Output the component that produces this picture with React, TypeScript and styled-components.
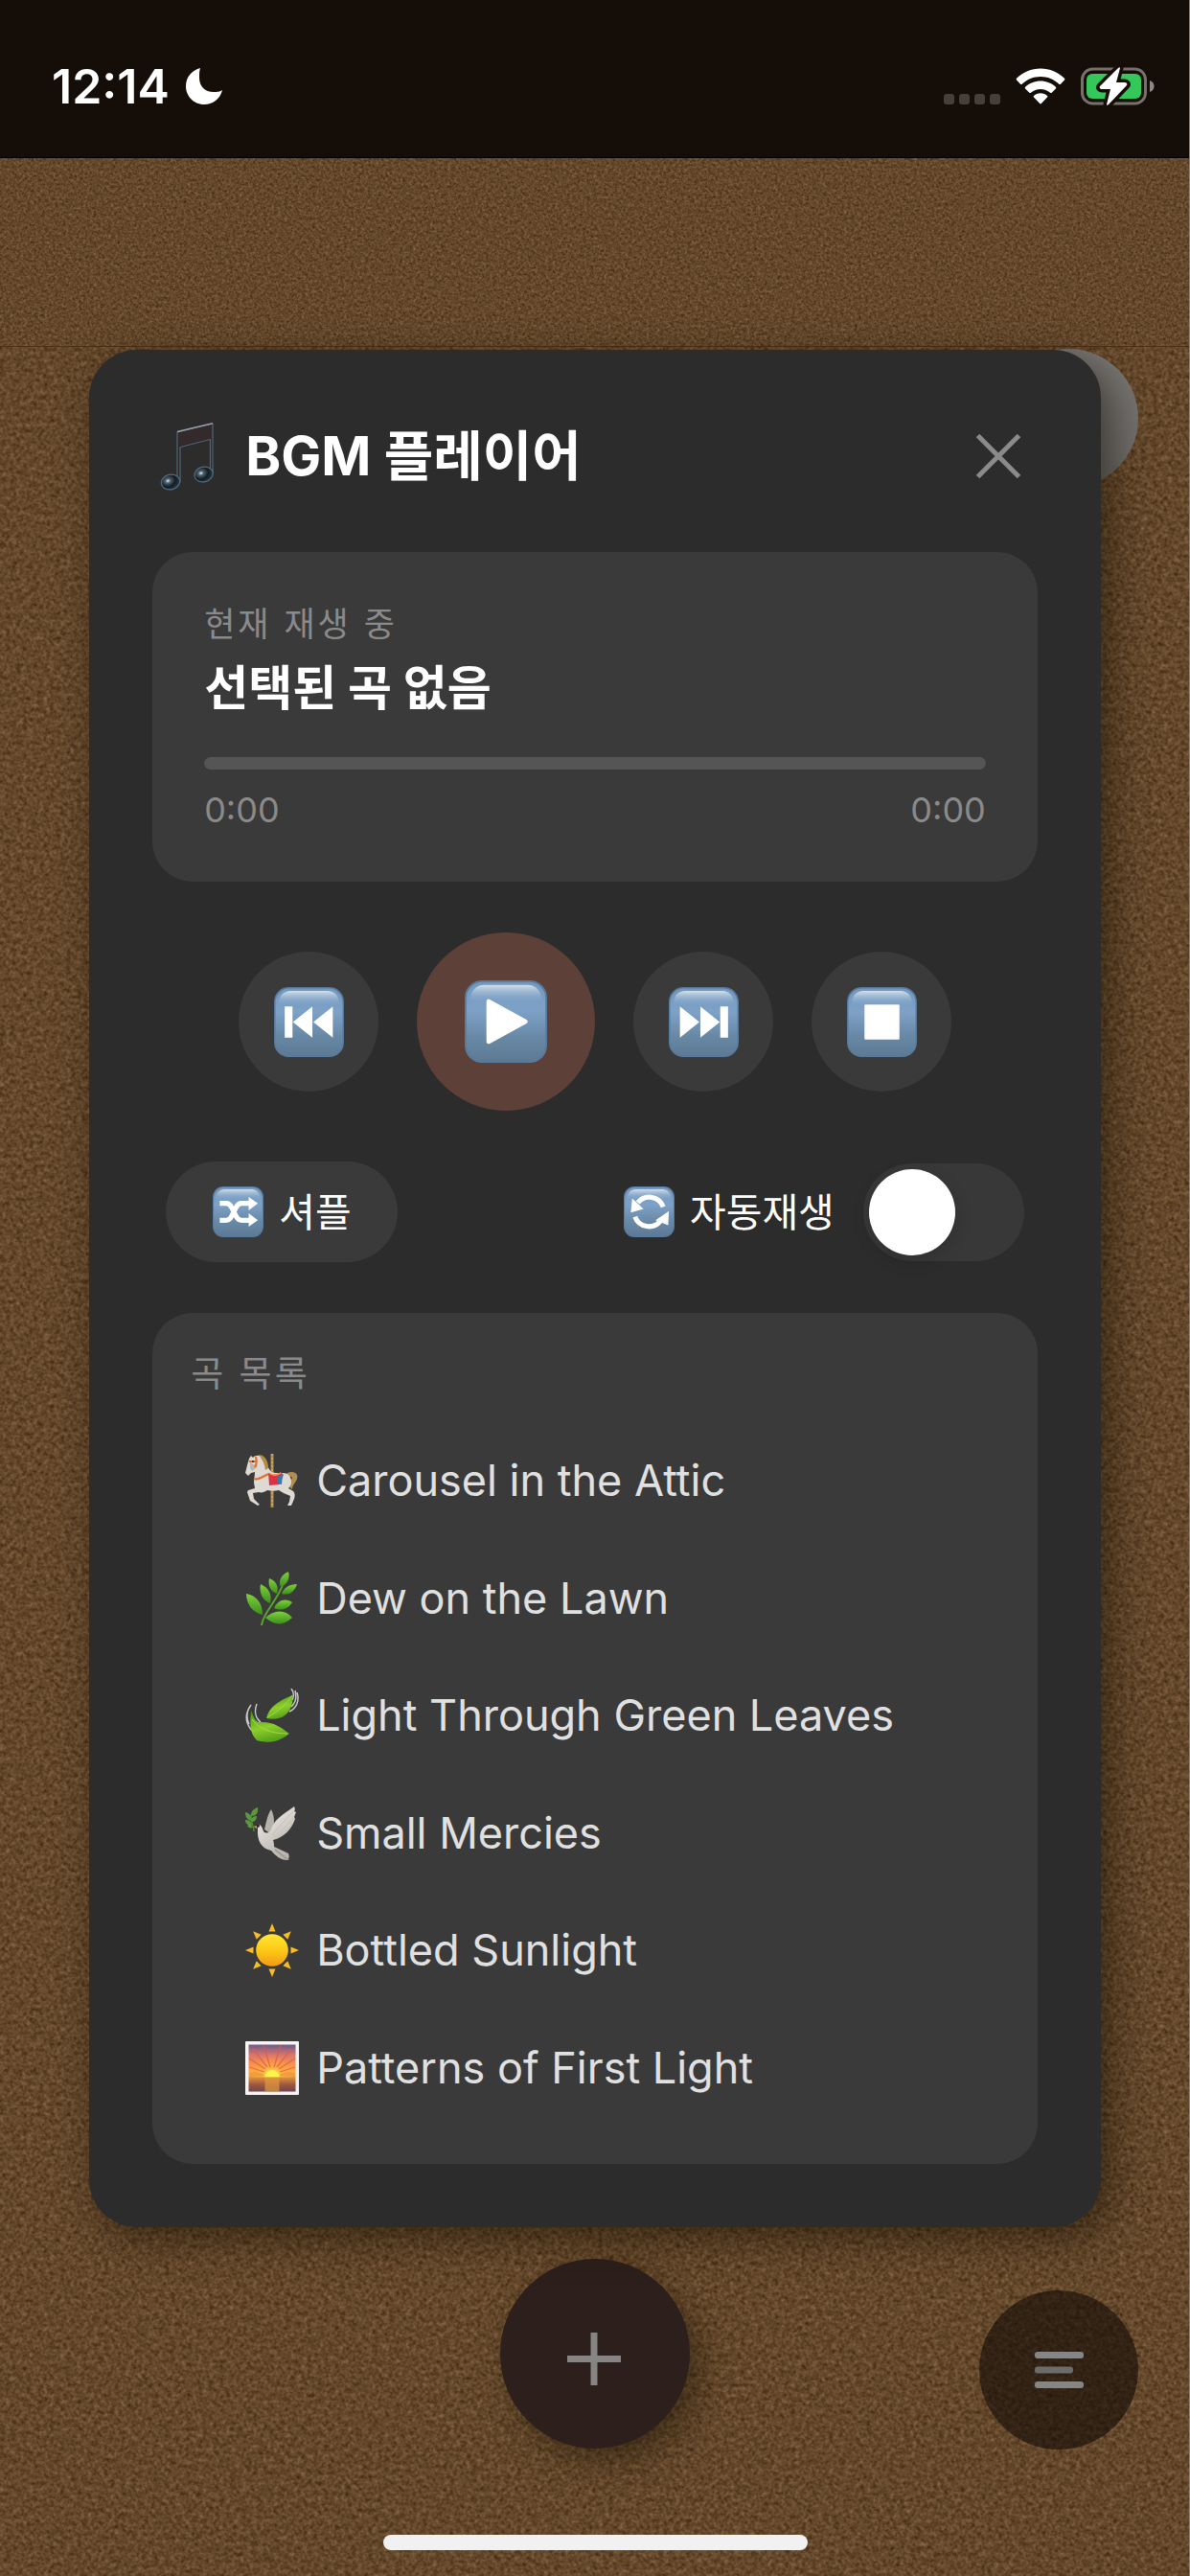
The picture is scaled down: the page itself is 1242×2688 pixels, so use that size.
import React, { useState } from 'react';
import styled, { createGlobalStyle } from 'styled-components';

const GlobalStyle = createGlobalStyle`
  *, *::before, *::after { box-sizing: border-box; }
  html, body { margin: 0; padding: 0; background: #64482b; }
  body, button, input {
    font-family: Inter, "Noto Sans CJK KR", "Noto Sans", sans-serif;
  }
  button { border: 0; padding: 0; background: none; color: inherit; cursor: pointer; }
  h1, h2, p, ul { margin: 0; padding: 0; }
  svg { display: block; }
`;

/* ---------- page ---------- */

const Page = styled.div`
  position: relative;
  min-height: 100vh;
  overflow: hidden;
  display: flex;
  flex-direction: column;
  background: #64482b;
`;

const Cork = styled.svg`
  position: absolute;
  inset: 0;
  width: 100%;
  height: 100%;
`;

const StatusBar = styled.header`
  position: relative;
  display: flex;
  align-items: center;
  justify-content: space-between;
  height: 165px;
  padding: 16px 37px 0 54px;
  background: #150d07;
  border-bottom: 1px solid #000;
`;

const StatusGroup = styled.div<{ $gap: number }>`
  display: flex;
  align-items: center;
  gap: ${(p) => p.$gap}px;
`;

const Clock = styled.span`
  color: #fff;
  font-size: 50px;
  line-height: 60px;
  font-weight: 600;
`;

const CellDots = styled.div`
  display: flex;
  gap: 5px;
  padding-top: 26px;

  i {
    width: 11px;
    height: 11px;
    border-radius: 3px;
    background: #473d39;
  }
`;

const TopStrip = styled.div`
  position: relative;
  height: 197px;
  overflow: hidden;
  background: #64482b;
  border-bottom: 1px solid #49311b;
`;

const EdgeLine = styled.div`
  position: absolute;
  top: 0;
  right: 0;
  bottom: 0;
  width: 1px;
  background: #8b8178;
`;

/* ---------- floating controls ---------- */

const CornerButton = styled.button`
  position: absolute;
  top: 364px;
  right: 54px;
  width: 145px;
  height: 145px;
  border-radius: 50%;
  background: linear-gradient(200deg, #7b7876, #656361);
`;

const AddButton = styled.button`
  position: absolute;
  bottom: 133px;
  left: calc(50% - 99px);
  width: 198px;
  height: 198px;
  border-radius: 50%;
  display: grid;
  place-items: center;
  padding: 11px 3px 0 0;
  background: #2c1f1c;
  box-shadow: 12px 14px 32px rgba(30, 22, 8, 0.5);
`;

const MenuButton = styled.button`
  position: absolute;
  bottom: 132px;
  right: 54px;
  width: 166px;
  height: 166px;
  border-radius: 50%;
  display: grid;
  place-items: center;
  background: rgba(16, 10, 6, 0.6);
`;

const HomeIndicator = styled.div`
  position: absolute;
  bottom: 27px;
  left: calc(50% - 221px);
  width: 443px;
  height: 16px;
  border-radius: 8px;
  background: #f1f1f1;
`;

/* ---------- modal ---------- */

const Overlay = styled.div`
  position: absolute;
  inset: 0;
  display: flex;
  align-items: center;
  justify-content: center;
  padding-top: 1px;
  pointer-events: none;
`;

const Modal = styled.section`
  width: 85%;
  display: flex;
  flex-direction: column;
  gap: 53px;
  padding: 66px;
  border-radius: 50px;
  background: #2c2c2c;
  box-shadow: 10px 12px 40px rgba(20, 12, 2, 0.55);
  pointer-events: auto;
`;

const ModalHeader = styled.div`
  display: flex;
  align-items: center;
  justify-content: space-between;
  height: 90px;
  margin-bottom: 2px;
  padding: 0 14px 0 6px;
`;

const Title = styled.h1`
  display: flex;
  align-items: center;
  gap: 25px;
  color: #fff;
  font-size: 56px;
  line-height: 84px;
  font-weight: 700;
`;

const Card = styled.div`
  border-radius: 42px;
  background: #3a3a3a;
`;

const NowPlaying = styled(Card)`
  display: flex;
  flex-direction: column;
  padding: 54px;
`;

const Caption = styled.p<{ $large?: boolean }>`
  color: #8a8a8a;
  font-size: ${(p) => (p.$large ? 37 : 35)}px;
  line-height: 42px;
  letter-spacing: 3px;
`;

const TrackName = styled.h2`
  margin: 17px 0 43px;
  color: #fff;
  font-size: 50px;
  line-height: 58px;
  font-weight: 700;
`;

const Seek = styled.input`
  appearance: none;
  display: block;
  width: 100%;
  height: 13px;
  margin: 0 0 21px;
  border-radius: 7px;
  background: #555;

  &::-webkit-slider-thumb {
    appearance: none;
    width: 0;
    height: 0;
  }
`;

const Times = styled.div`
  display: flex;
  justify-content: space-between;
  color: #8a8a8a;
  font-size: 36px;
  line-height: 42px;
`;

const Controls = styled.div`
  display: flex;
  align-items: center;
  justify-content: center;
  gap: 40px;
`;

const RoundButton = styled.button<{ $primary?: boolean }>`
  width: ${(p) => (p.$primary ? 186 : 146)}px;
  height: ${(p) => (p.$primary ? 186 : 146)}px;
  border-radius: 50%;
  display: grid;
  place-items: center;
  background: ${(p) => (p.$primary ? '#5d4037' : '#3a3a3a')};
`;

const Options = styled.div`
  display: flex;
  align-items: center;
  justify-content: space-between;
  height: 105px;
  padding: 0 14px;
  color: #fff;
  font-size: 41px;
  line-height: 60px;
`;

const ShuffleButton = styled.button`
  display: flex;
  align-items: center;
  gap: 16px;
  height: 105px;
  padding: 0 48px 0 49px;
  border-radius: 53px;
  background: #3a3a3a;
  font-size: 41px;
  line-height: 60px;
`;

const AutoPlay = styled.label`
  display: flex;
  align-items: center;
  gap: 16px;
`;

const Switch = styled.input`
  appearance: none;
  flex: none;
  width: 168px;
  height: 102px;
  margin: 0 0 0 14px;
  padding: 6px;
  border-radius: 51px;
  background: #383838;
  display: flex;
  align-items: center;
  cursor: pointer;

  &::before {
    content: '';
    width: 90px;
    height: 90px;
    border-radius: 50%;
    background: #fff;
    box-shadow: 0 6px 18px rgba(0, 0, 0, 0.15);
  }

  &:checked { justify-content: flex-end; background: #5d4037; }
`;

const ListCard = styled(Card)`
  padding: 43px 40px 39px;
`;

const Tracks = styled.ul`
  display: grid;
  grid-auto-rows: 1fr;
  min-height: 735px;
  margin-top: 29px;
  list-style: none;

  li { display: flex; }
`;

const TrackButton = styled.button`
  flex: 1;
  display: flex;
  align-items: center;
  gap: 18px;
  padding-left: 57px;
  color: #e0e0e0;
  font-size: 45px;
  line-height: 60px;
  text-align: left;
`;

/* ---------- drawings ---------- */

const SharedDefs = () => (
  <svg width="0" height="0" style={{ position: 'absolute' }} aria-hidden="true">
    <defs>
      <linearGradient id="keyFace" x1="0" y1="0" x2="0" y2="1">
        <stop offset="0" stopColor="#7398bd" />
        <stop offset="0.35" stopColor="#7ea1c7" />
        <stop offset="0.7" stopColor="#6889a6" />
        <stop offset="1" stopColor="#5d7a94" />
      </linearGradient>
      <linearGradient id="keyShine" x1="0" y1="0" x2="0" y2="1">
        <stop offset="0" stopColor="#d3e0ec" />
        <stop offset="1" stopColor="#7ea1c7" stopOpacity="0" />
      </linearGradient>
      <linearGradient id="leaf" x1="0" y1="0" x2="0" y2="1">
        <stop offset="0" stopColor="#7fd13b" />
        <stop offset="1" stopColor="#3b8f1c" />
      </linearGradient>
      <linearGradient id="leafLight" x1="0" y1="0" x2="0.3" y2="1">
        <stop offset="0" stopColor="#3f9418" />
        <stop offset="0.6" stopColor="#8ccf2c" />
        <stop offset="1" stopColor="#5aa41c" />
      </linearGradient>
      <linearGradient id="sunFill" x1="0" y1="0" x2="0" y2="1">
        <stop offset="0" stopColor="#ffe733" />
        <stop offset="0.5" stopColor="#fcc916" />
        <stop offset="1" stopColor="#f19a15" />
      </linearGradient>
      <linearGradient id="dawn" x1="0" y1="0" x2="0" y2="1">
        <stop offset="0" stopColor="#6c5a8a" />
        <stop offset="0.22" stopColor="#d8766a" />
        <stop offset="0.48" stopColor="#ff9a45" />
        <stop offset="0.66" stopColor="#ffc24a" />
        <stop offset="0.7" stopColor="#d8913e" />
        <stop offset="0.85" stopColor="#a0573f" />
        <stop offset="1" stopColor="#6f4450" />
      </linearGradient>
      <radialGradient id="dawnGlow" cx="0.5" cy="0.9" r="0.6">
        <stop offset="0" stopColor="#fff36a" />
        <stop offset="0.35" stopColor="#ffb43c" stopOpacity="0.75" />
        <stop offset="1" stopColor="#ff8a45" stopOpacity="0" />
      </radialGradient>
      <linearGradient id="feather" x1="0" y1="0" x2="0.5" y2="1">
        <stop offset="0" stopColor="#f3f0eb" />
        <stop offset="1" stopColor="#b9b4ae" />
      </linearGradient>
      <radialGradient id="noteHead" cx="0.38" cy="0.38" r="0.65">
        <stop offset="0" stopColor="#e4ecf1" />
        <stop offset="0.22" stopColor="#4c6270" />
        <stop offset="0.6" stopColor="#161c21" />
        <stop offset="1" stopColor="#263945" />
      </radialGradient>
    </defs>
  </svg>
);

const Key = ({ size, children }: { size: number; children: React.ReactNode }) => (
  <svg width={size} height={size} viewBox="0 0 72 72" aria-hidden="true">
    <rect width="72" height="72" rx="15" fill="#587a9c" />
    <rect x="1.5" y="1.5" width="69" height="69" rx="14" fill="url(#keyFace)" />
    <path d="M5 20V17C5 9 10 4 17 4h38c7 0 12 5 12 13v3z" fill="url(#keyShine)" />
    <g fill="#fff">{children}</g>
  </svg>
);

const MusicNotes = () => (
  <svg width="66" height="74" viewBox="0 0 66 74" aria-hidden="true">
    <path
      d="M20 12 57 3V56h-2.500V19.500L23 27.500V64h-3z"
      fill="#2b2628"
      stroke="#506877"
      strokeWidth="1.200"
      strokeLinejoin="round"
    />
    <path d="M21 13 56 4.500V18L22.500 26z" fill="#352a2b" />
    <path d="M20 11.500 57 2.800" stroke="#96a0a6" strokeWidth="1.500" />
    <ellipse cx="13" cy="64" rx="9.800" ry="7.800" fill="url(#noteHead)" stroke="#4f6c80" strokeWidth="1.200" transform="rotate(-14 13 64)" />
    <ellipse cx="47.500" cy="56" rx="9.800" ry="7.800" fill="url(#noteHead)" stroke="#4f6c80" strokeWidth="1.200" transform="rotate(-14 47.500 56)" />
  </svg>
);

const Carousel = () => (
  <svg width="56" height="56" viewBox="0 0 56 56" aria-hidden="true">
    <path d="M28 0v56" stroke="#b08d4e" strokeWidth="3" />
    <path d="M28 0v56" stroke="#d9bd80" strokeWidth="1" strokeDasharray="2 2" />
    <path d="M40 24c3-5 11-7 14-2 2 6-5 9-5 15-4-2-4-7-1-10 2-3 0-4-2-3-2 1-3 2-4 4z" fill="#b08d50" />
    <path
      d="M4 5l2-3 2 2c3-3 8-3 11 1 3 4 4 8 6 11 2 3 4 4 7 4h7c6 0 9 4 9 9 0 3-1 5-3 7l5 3c2 2 2 5 1 8l-3 7h-4l2-4 1-6-7-3-5-3c-4 1-8 1-12 0-3 2-6 3-9 2l-6 1 1 6 6 6-2 1-8-5-3-9 1-2 7-2c0-2-1-4-1-6 0-4 1-7 1-11l-4 1-3 3-3-3 2-8z"
      fill="#dedad3"
    />
    <path d="M5 8c2 2 4 4 8 5l-2 2-4 3-2-3z" fill="#b7b6b1" />
    <path d="M14 1c6 0 10 6 10 14l-3 2c-1-6-2-9-5-13z" fill="#b38b46" />
    <path d="M4 8h7M11 3c1 4 1 8-1 11M9 26c6 2 11-4 16-5" stroke="#df7130" strokeWidth="2.200" fill="none" />
    <path d="M24 20c4 3 8 2 13-1l3 3-4 10-11 1z" fill="#db3341" />
    <path d="M34 24l5-3-1 11-5-1z" fill="#2c7cb5" />
    <path d="M25 20c4 3 8 3 12 0" stroke="#f0a64a" strokeWidth="1.500" fill="none" />
    <circle cx="8" cy="8" r="1" fill="#222" />
  </svg>
);

const Herb = () => (
  <svg width="56" height="56" viewBox="0 0 56 56" aria-hidden="true">
    <path d="M17 56c1-12 15-24 22-42" stroke="#57a52c" strokeWidth="2" fill="none" />
    <g fill="url(#leaf)">
      <path d="M45 0c2 7-1 13-8 16-3-7 1-13 8-16z" />
      <path d="M25 7c8 3 10 9 8 16-6-2-10-8-8-16z" />
      <path d="M54 13c-3 9-9 12-16 10 2-6 8-10 16-10z" />
      <path d="M16 13c9 4 12 11 10 20-8-3-12-11-10-20z" />
      <path d="M49 32c-5 8-12 9-19 6 4-8 11-11 19-6z" />
      <path d="M1 23c11 2 17 10 17 22C8 43 1 34 1 23z" />
      <path d="M49 48c-9 9-19 8-28 0 9-8 20-9 28 0z" />
    </g>
  </svg>
);

const FlutteringLeaves = () => (
  <svg width="56" height="56" viewBox="0 0 56 56" aria-hidden="true">
    <g fill="none" stroke="#c9c9c9" strokeWidth="1.500">
      <path d="M6 17C-1 27 0 36 7 44M12 16c-3 8-1 15 4 19M3 22c-2 6-1 11 1 15" />
      <path d="M48 0c3 4 3 8 1 12M54 4c3 9-1 17-8 20M52 2c2 9 0 13-4 17" />
    </g>
    <path d="M49 7c2 15-8 28-27 24C25 18 37 12 49 7z" fill="url(#leafLight)" />
    <path d="M49 7c-6 9-15 17-26 23" stroke="#a8d84a" strokeWidth="1" fill="none" />
    <path d="M6 23c3 6 3 10 8 12 15-1 23 5 32 12-12 10-24 10-34 7C4 46 5 35 6 23z" fill="url(#leafLight)" />
    <path d="M7 32c7 10 20 15 37 15" stroke="#a8d84a" strokeWidth="1" fill="none" />
  </svg>
);

const Dove = () => (
  <svg width="56" height="56" viewBox="0 0 56 56" aria-hidden="true">
    <path d="M20 24c2-8 3-15 7-21 2 4 3 8 3 14l-3 12z" fill="#b5b1ab" />
    <path d="M12 18c4 0 6 4 7 8 2 2 4 2 7 0C29 14 40 8 51 0c1 2 1 4 0 5l2 1-2 5 1 2c-4 11-11 19-23 22 1 3 1 5 1 7l15 7c1 3 1 5-1 7-7 0-13-5-17-10-10-2-15-10-14-23z" fill="url(#feather)" />
    <path d="M28 30c7-9 14-16 22-25M30 31c8-6 15-12 20-19M31 33c8-4 14-9 18-15" stroke="#c4bfb9" strokeWidth="1" fill="none" />
    <path d="M31 45l14 11" stroke="#a09b95" strokeWidth="2" />
    <circle cx="13" cy="20" r="2" fill="#342a25" />
    <path d="M8 21l4-1v3z" fill="#c9886c" />
    <path d="M9 26C9 18 3 14 8 5" stroke="#4c8a36" strokeWidth="1.500" fill="none" />
    <g fill="#5b9840">
      <path d="M13 1c1 6-2 9-7 9 0-5 3-8 7-9zM0 6c5 1 7 4 6 9-4-1-6-4-6-9zM12 10c0 5-3 6-6 6 0-4 2-6 6-6zM0 14c4 0 7 2 7 6-4 0-7-2-7-6zM2 20c3-1 5 0 6 2-3 1-5 0-6-2z" />
    </g>
  </svg>
);

const Sun = () => (
  <svg width="56" height="56" viewBox="0 0 56 56" aria-hidden="true">
    <g fill="#f9bd24">
      {[0, 45, 90, 135, 180, 225, 270, 315].map((a) => (
        <path key={a} d="M28 0l3.500 8.500h-7z" transform={`rotate(${a} 28 28)`} />
      ))}
    </g>
    <circle cx="28" cy="28" r="16.800" fill="url(#sunFill)" />
  </svg>
);

const Sunrise = () => (
  <svg width="56" height="56" viewBox="0 0 56 56" aria-hidden="true">
    <rect width="56" height="56" rx="1" fill="#f7f5f4" />
    <rect x="3.500" y="3.500" width="49" height="49" fill="url(#dawn)" />
    <rect x="3.500" y="3.500" width="49" height="34" fill="url(#dawnGlow)" />
    <g stroke="#e2564c" strokeWidth="1.300" opacity="0.75">
      <path d="M26 27 19 4M30 27 37 4M23 27 8 8M33 27 48 8M21 29 4 18M35 29 52 18M20 32 4 27M36 32 52 27" />
    </g>
    <path d="M20.500 37.500a7.500 7.500 0 0 1 15 0z" fill="#fff34d" />
    <path d="M4 33l6-1 8 2 2 2-16 1zM52 33l-7-1-8 2-1 2 16 1z" fill="#ef9e3d" />
    <rect x="20.500" y="37.500" width="15" height="15" fill="#e09a3c" opacity="0.7" />
  </svg>
);

const TRACKS = [
  { title: 'Carousel in the Attic', Icon: Carousel },
  { title: 'Dew on the Lawn', Icon: Herb },
  { title: 'Light Through Green Leaves', Icon: FlutteringLeaves },
  { title: 'Small Mercies', Icon: Dove },
  { title: 'Bottled Sunlight', Icon: Sun },
  { title: 'Patterns of First Light', Icon: Sunrise },
];

/* Two noise fields of unrelated pitch are averaged so that no grid shows through. */
const CorkTexture = ({ id, grain }: { id: string; grain: number }) => (
  <Cork aria-hidden="true">
    <filter id={id} x="0" y="0" width="100%" height="100%" colorInterpolationFilters="sRGB">
      <feTurbulence type="fractalNoise" baseFrequency={grain} numOctaves={2} seed={7} result="a" />
      <feTurbulence type="fractalNoise" baseFrequency={grain * 0.617} numOctaves={3} seed={23} result="b" />
      <feColorMatrix in="a" values="1 0 0 0 0  1 0 0 0 0  1 0 0 0 0  0 0 0 0 1" result="ga" />
      <feColorMatrix in="b" values="0 1 0 0 0  0 1 0 0 0  0 1 0 0 0  0 0 0 0 1" result="gb" />
      <feComposite in="ga" in2="gb" operator="arithmetic" k1="0" k2="0.55" k3="0.45" k4="0" />
      <feColorMatrix
        values="0.460 0 0 0 0.162
                0.400 0 0 0 0.082
                0.340 0 0 0 -0.001
                0 0 0 0 1"
      />
    </filter>
    <rect width="100%" height="100%" filter={`url(#${id})`} />
  </Cork>
);

export default function App() {
  const [autoPlay, setAutoPlay] = useState(false);

  return (
    <Page>
      <GlobalStyle />
      <SharedDefs />
      <CorkTexture id="boardCork" grain={0.283} />

      <StatusBar>
        <StatusGroup $gap={16}>
          <Clock>12:14</Clock>
          <svg width="40" height="40" viewBox="0 0 40 40" aria-label="Focus">
            <path d="M16 1C8 3 1 10 1 20c0 10 8 19 19 19 9 0 17-6 19-15-3 2-6 2-9 2-9 0-15-6-15-15 0-4 0-7 1-10z" fill="#fff" />
          </svg>
        </StatusGroup>
        <StatusGroup $gap={16}>
          <CellDots><i /><i /><i /><i /></CellDots>
          <svg width="52" height="38" viewBox="0 0 52 38" aria-label="Wi-Fi">
            <g fill="#fff">
              <path d="M26 0.500c9.500 0 18.500 3.800 25 10.200.5.500.5 1.200 0 1.700l-4 4.300c-.5.500-1.200.5-1.700 0C40 11.700 33.300 9 26 9S12 11.700 6.700 16.700c-.5.500-1.200.5-1.700 0l-4-4.300c-.5-.5-.5-1.200 0-1.700C7.500 4.300 16.500.5 26 .5z" />
              <path d="M26 13.500c6 0 11.600 2.300 15.900 6.200.5.500.5 1.200 0 1.700l-4.200 4.300c-.5.500-1.100.5-1.600 0C33.300 23.400 29.800 22 26 22s-7.300 1.400-10.100 3.700c-.5.500-1.100.5-1.600 0l-4.200-4.300c-.5-.5-.5-1.200 0-1.700 4.300-3.900 9.900-6.200 15.900-6.200z" />
              <path d="M26 26.300c2.700 0 5.100 1 7 2.600.5.400.5 1.200 0 1.700l-6.200 6.400c-.5.500-1.100.5-1.600 0L19 30.600c-.5-.5-.5-1.300 0-1.700 1.900-1.600 4.300-2.600 7-2.600z" />
            </g>
          </svg>
          <svg width="77" height="40" viewBox="0 0 77 40" aria-label="Battery charging">
            <rect x="1.500" y="2" width="66" height="36" rx="11" fill="none" stroke="#77716d" strokeWidth="3" />
            <path d="M72 14c3 1 4.500 3 4.500 6s-1.500 5-4.500 6z" fill="#8e8986" />
            <rect x="6" y="7" width="57" height="26" rx="6" fill="#34c759" />
            <path
              d="M39 1 20 20c-1 1.500 0 3 2 3h9l-4 16c0 1 1 1 2 0l19-20c1-1 0-3-2-3h-9l4-15c0-1-1-1-2 0z"
              fill="#fff"
              stroke="#150d07"
              strokeWidth="7"
              paintOrder="stroke"
            />
          </svg>
        </StatusGroup>
      </StatusBar>

      <TopStrip>
        <CorkTexture id="stripCork" grain={0.447} />
      </TopStrip>

      <EdgeLine />
      <CornerButton aria-label="Music" />
      <AddButton aria-label="Add">
        <svg width="56" height="56" viewBox="0 0 56 56" aria-hidden="true">
          <path d="M28 0v55M0 27.500h56" stroke="#868584" strokeWidth="7" />
        </svg>
      </AddButton>
      <MenuButton aria-label="Menu">
        <svg width="51" height="38" viewBox="0 0 51 38" aria-hidden="true">
          <rect width="51" height="7" rx="3" fill="#858585" />
          <rect y="15.500" width="40" height="7" rx="3" fill="#6e6c6a" />
          <rect y="31" width="51" height="7" rx="3" fill="#858585" />
        </svg>
      </MenuButton>
      <HomeIndicator />

      <Overlay>
        <Modal role="dialog" aria-labelledby="player-title">
          <ModalHeader>
            <Title>
              <MusicNotes />
              <span id="player-title">BGM 플레이어</span>
            </Title>
            <button aria-label="닫기">
              <svg width="54" height="54" viewBox="0 0 54 54" aria-hidden="true">
                <path d="M5.500 5.500l43 43M48.500 5.500l-43 43" stroke="#8a8a8a" strokeWidth="5" />
              </svg>
            </button>
          </ModalHeader>

          <NowPlaying>
            <Caption>현재 재생 중</Caption>
            <TrackName>선택된 곡 없음</TrackName>
            <Seek type="range" min="0" max="100" defaultValue="0" aria-label="재생 위치" />
            <Times>
              <span>0:00</span>
              <span>0:00</span>
            </Times>
          </NowPlaying>

          <Controls>
            <RoundButton aria-label="이전 곡">
              <Key size={73}>
                <path d="M11 20h8v32h-8zM39.500 20v32L19.500 36zM60.500 20v32L40.500 36z" />
              </Key>
            </RoundButton>
            <RoundButton $primary aria-label="재생">
              <Key size={86}>
                <path d="M21 18.500v35L53 36z" stroke="#fff" strokeWidth="4" strokeLinejoin="round" />
              </Key>
            </RoundButton>
            <RoundButton aria-label="다음 곡">
              <Key size={73}>
                <path d="M61 20h-8v32h8zM32.500 20v32l20-16zM11.500 20v32l20-16z" />
              </Key>
            </RoundButton>
            <RoundButton aria-label="정지">
              <Key size={73}>
                <rect x="18" y="18" width="36" height="36" rx="1" />
              </Key>
            </RoundButton>
          </Controls>

          <Options>
            <ShuffleButton>
              <Key size={53}>
                <path
                  d="M10 24h9c4 0 6 2 8 6l6 12c2 4 4 6 8 6h11M10 48h9c4 0 6-2 8-6l6-12c2-4 4-6 8-6h11"
                  fill="none"
                  stroke="#fff"
                  strokeWidth="7"
                />
                <path d="M51 15l13 9-13 10zM51 38l13 10-13 9z" />
              </Key>
              셔플
            </ShuffleButton>
            <AutoPlay>
              <Key size={53}>
                <path d="M56 29A21 21 0 0 0 20 23M16 43a21 21 0 0 0 36 6" fill="none" stroke="#fff" strokeWidth="7" />
                <path d="M12 17l-2 20 18-5zM64 35l-1 20-18-7z" />
              </Key>
              <span>자동재생</span>
              <Switch type="checkbox" checked={autoPlay} onChange={(e) => setAutoPlay(e.target.checked)} />
            </AutoPlay>
          </Options>

          <ListCard>
            <Caption $large>곡 목록</Caption>
            <Tracks>
              {TRACKS.map(({ title, Icon }) => (
                <li key={title}>
                  <TrackButton>
                    <Icon />
                    {title}
                  </TrackButton>
                </li>
              ))}
            </Tracks>
          </ListCard>
        </Modal>
      </Overlay>
    </Page>
  );
}
